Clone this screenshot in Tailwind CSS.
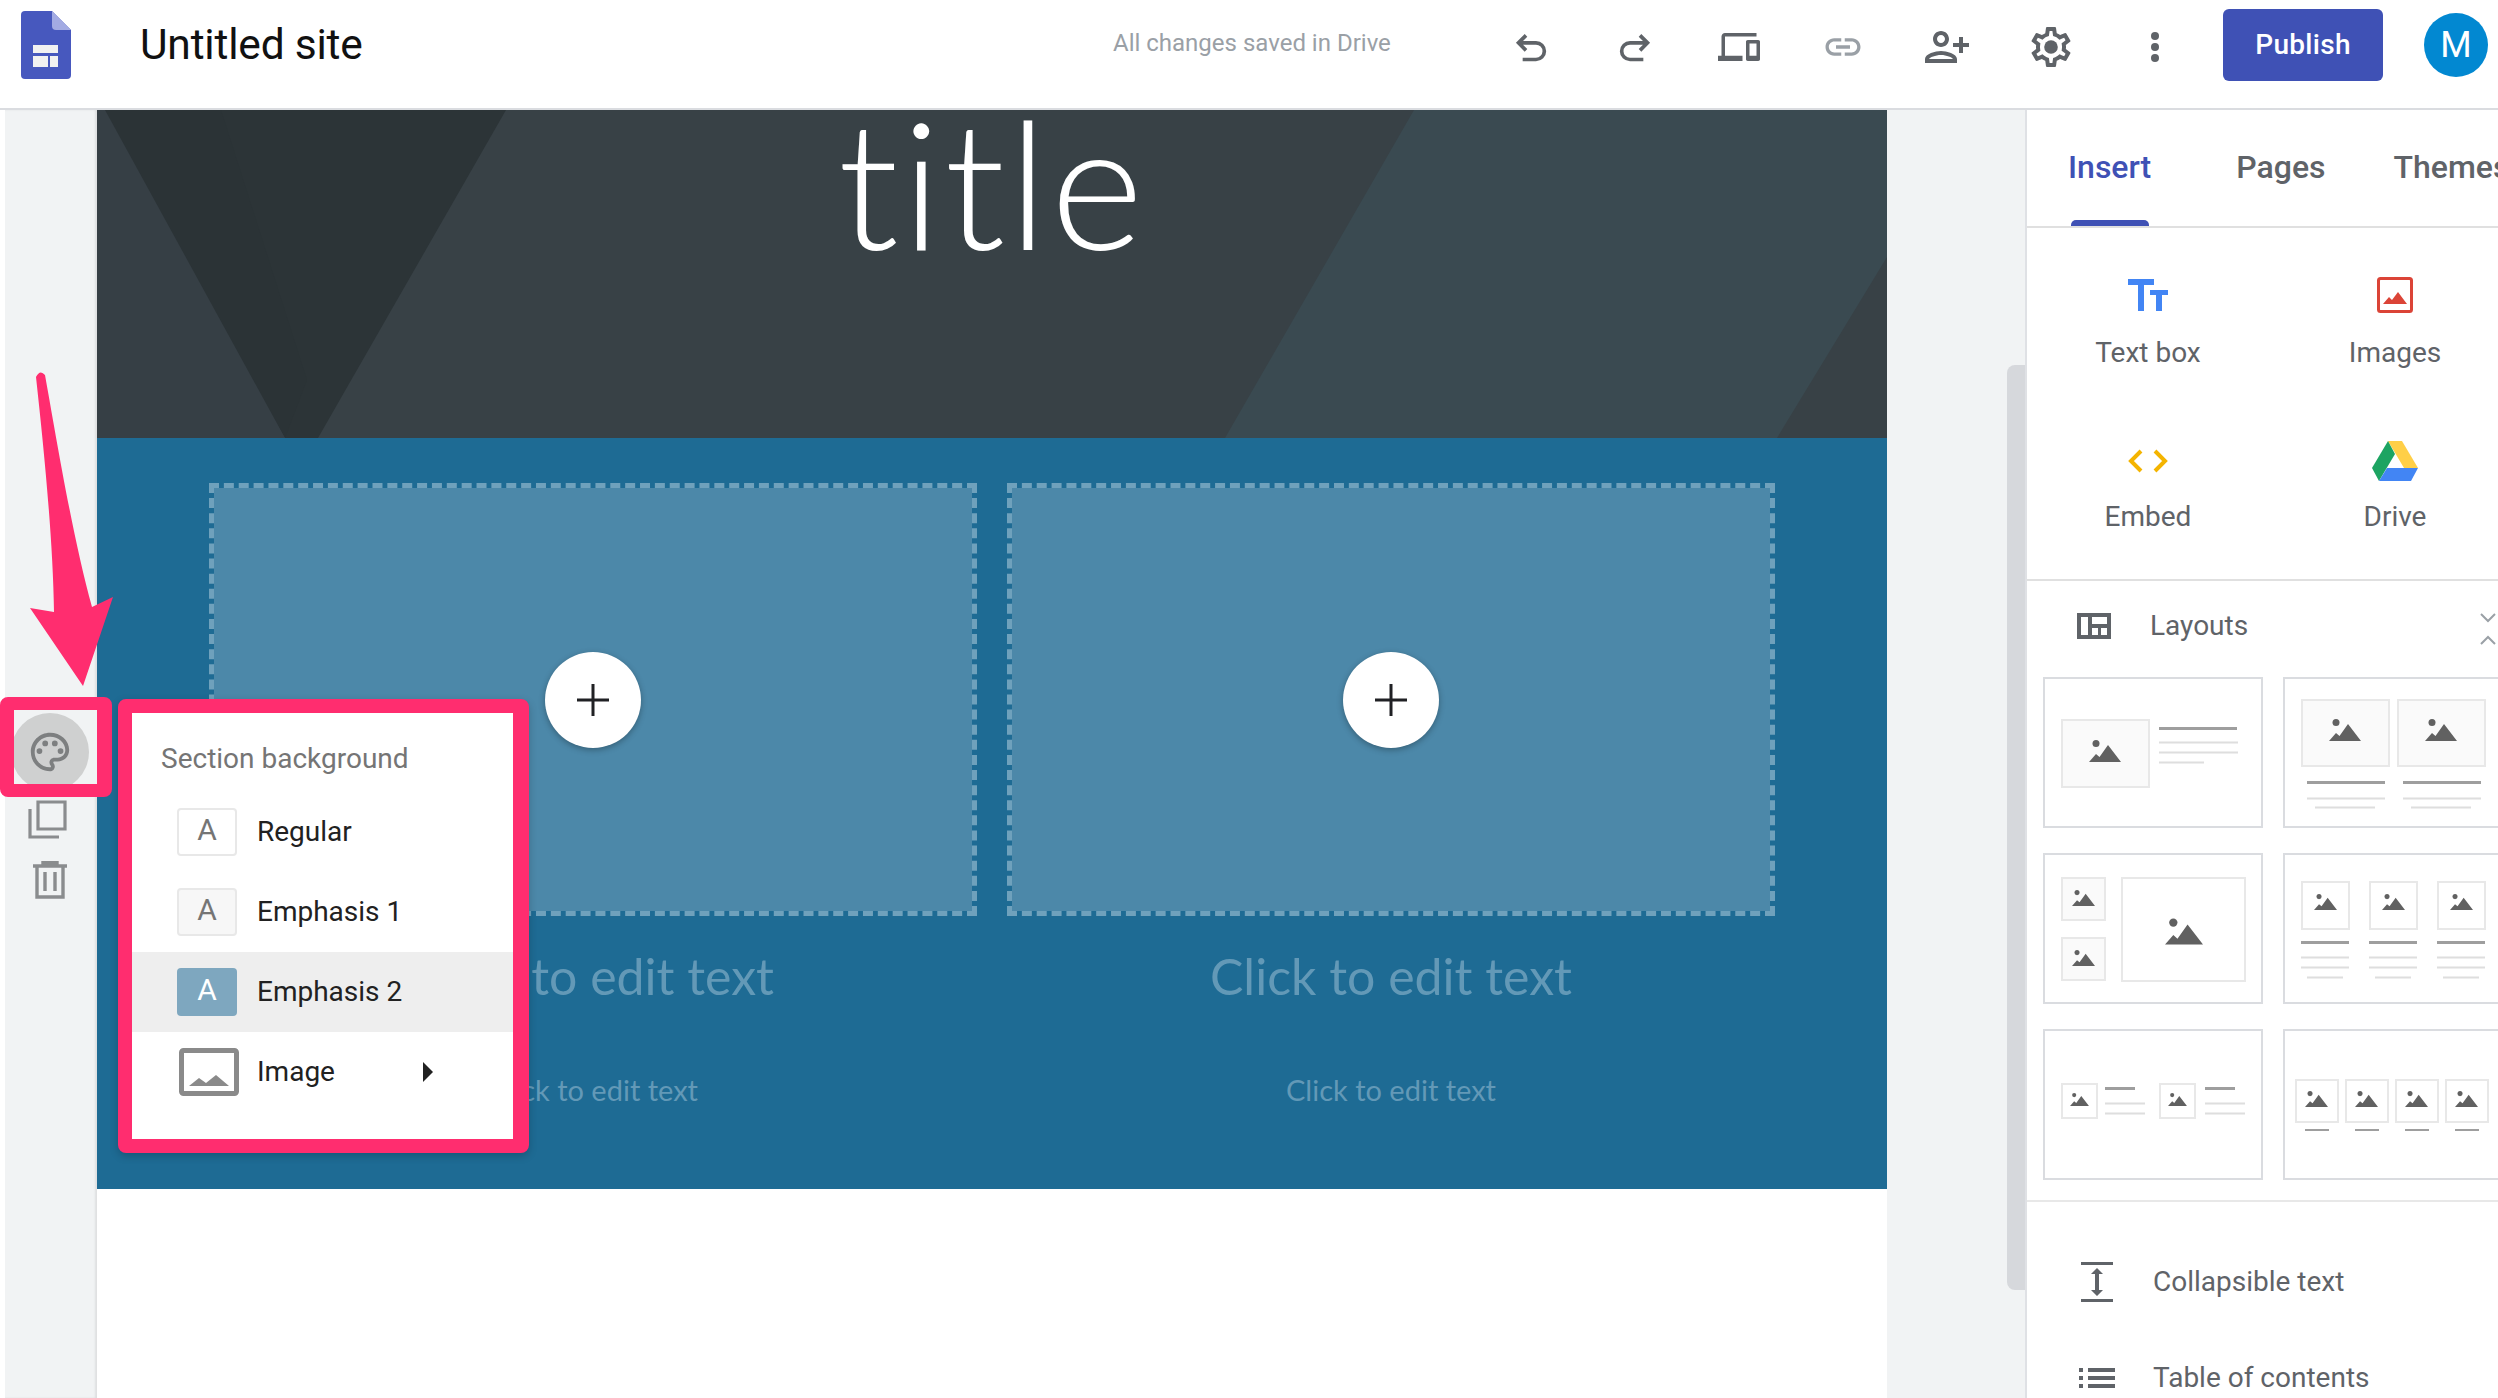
<!DOCTYPE html>
<html><head><meta charset="utf-8"><script src="https://cdn.jsdelivr.net/npm/@tailwindcss/browser@4"></script></head>
<body class="w-[2498px] h-[1398px] overflow-hidden bg-white font-['Roboto',sans-serif] relative">
<svg class="absolute w-0 h-0"><defs>
<symbol id="m" viewBox="0 0 32 22"><circle cx="7" cy="3.5" r="3.5" fill="#616161"/><path d="M0 22 L7 14 L10.5 17 L19 5 L32 22Z" fill="#616161"/></symbol>
</defs></svg>

<header class="h-[110px] border-b-2 border-[#dadce0] flex items-center pb-[26px] pt-[8px] relative">
  <svg class="ml-[21px] w-[50px] h-[68px] shrink-0" viewBox="0 0 50 68"><path d="M4 0H31L50 19V64a4 4 0 0 1-4 4H4a4 4 0 0 1-4-4V4a4 4 0 0 1 4-4Z" fill="#4758be"/><path d="M31 0L50 19H35a4 4 0 0 1-4-4Z" fill="#a3abe3"/><path d="M12 34H37V42H12ZM12 45H27V56H12ZM29 45H37V56H29Z" fill="#f1f1f1"/></svg>
  <div class="ml-[69px] w-[300px] text-[42.5px] leading-none text-[#111] font-['Roboto'] tracking-[-0.2px] whitespace-nowrap shrink-0">Untitled site</div>
  <div class="ml-[673px] w-[277px] text-[24px] leading-none text-[#9aa0a6] whitespace-nowrap shrink-0 -mt-[4px]">All changes saved in Drive</div>
  <div class="ml-[117px] mt-[4px] flex items-center gap-[56px] shrink-0">
    <div class="w-[48px] flex justify-center"><svg class="w-[40px] h-[40px]" viewBox="0 0 24 24" fill="none" stroke="#5f6368" stroke-width="2.2"><path d="M9 5L4.5 9.5L9 14M4.5 9.5H15a5 5 0 0 1 0 10H7"/></svg></div>
    <div class="w-[48px] flex justify-center"><svg class="w-[40px] h-[40px]" viewBox="0 0 24 24" fill="none" stroke="#5f6368" stroke-width="2.2"><path d="M15 5L19.5 9.5L15 14M19.5 9.5H9a5 5 0 0 0 0 10H17"/></svg></div>
    <div class="w-[48px] flex justify-center"><svg class="w-[42px] h-[42px]" viewBox="0 0 24 24" fill="#5f6368"><path d="M4 6h18V4H4c-1.1 0-2 .9-2 2v11H0v3h14v-3H4V6zm19 2h-6c-.55 0-1 .45-1 1v10c0 .55.45 1 1 1h6c.55 0 1-.45 1-1V9c0-.55-.45-1-1-1zm-1 9h-4v-7h4v7z"/></svg></div>
    <div class="w-[48px] flex justify-center"><svg class="w-[42px] h-[42px]" viewBox="0 0 24 24" fill="#9aa0a6"><path d="M3.9 12c0-1.71 1.39-3.1 3.1-3.1h4V7H7c-2.76 0-5 2.24-5 5s2.24 5 5 5h4v-1.9H7c-1.71 0-3.1-1.39-3.1-3.1zM8 13h8v-2H8v2zm9-6h-4v1.9h4c1.71 0 3.1 1.39 3.1 3.1s-1.39 3.1-3.1 3.1h-4V17h4c2.76 0 5-2.24 5-5s-2.24-5-5-5z"/></svg></div>
    <div class="w-[48px] flex justify-center"><svg class="w-[48px] h-[48px] -scale-x-100" viewBox="0 0 24 24" fill="#5f6368"><path d="M15 12c2.21 0 4-1.79 4-4s-1.79-4-4-4-4 1.79-4 4 1.79 4 4 4zm0-6c1.1 0 2 .9 2 2s-.9 2-2 2-2-.9-2-2 .9-2 2-2zm0 8c-2.67 0-8 1.34-8 4v2h16v-2c0-2.66-5.33-4-8-4zm-6 4c.22-.72 3.31-2 6-2 2.7 0 5.8 1.29 6 2H9zm-3-3v-3h3v-2H6V7H4v3H1v2h3v3h2z"/></svg></div>
    <div class="w-[48px] flex justify-center"><svg class="w-[48px] h-[48px]" viewBox="0 0 24 24" fill="#5f6368"><path d="M19.43 12.98c.04-.32.07-.64.07-.98 0-.34-.03-.66-.07-.98l2.11-1.65c.19-.15.24-.42.12-.64l-2-3.46c-.09-.16-.26-.25-.44-.25-.06 0-.12.01-.17.03l-2.49 1c-.52-.4-1.08-.73-1.69-.98l-.38-2.65C14.46 2.18 14.25 2 14 2h-4c-.25 0-.46.18-.49.42l-.38 2.65c-.61.25-1.17.59-1.69.98l-2.49-1c-.06-.02-.12-.03-.18-.03-.17 0-.34.09-.43.25l-2 3.46c-.13.22-.07.49.12.64l2.11 1.65c-.04.32-.07.65-.07.98 0 .33.03.66.07.98l-2.11 1.65c-.19.15-.24.42-.12.64l2 3.46c.09.16.26.25.44.25.06 0 .12-.01.17-.03l2.49-1c.52.4 1.08.73 1.69.98l.38 2.65c.03.24.24.42.49.42h4c.25 0 .46-.18.49-.42l.38-2.65c.61-.25 1.17-.59 1.69-.98l2.49 1c.06.02.12.03.18.03.17 0 .34-.09.43-.25l2-3.46c.12-.22.07-.49-.12-.64l-2.11-1.65zm-1.98-1.71c.04.31.05.52.05.73 0 .21-.02.43-.05.73l-.14 1.13.89.7 1.08.84-.7 1.21-1.27-.51-1.04-.42-.9.68c-.43.32-.84.56-1.25.73l-1.06.43-.16 1.13-.2 1.35h-1.4l-.19-1.35-.16-1.13-1.06-.43c-.43-.18-.83-.41-1.23-.71l-.91-.7-1.06.43-1.27.51-.7-1.21 1.08-.84.89-.7-.14-1.13c-.03-.31-.05-.54-.05-.74s.02-.43.05-.73l.14-1.13-.89-.7-1.08-.84.7-1.21 1.27.51 1.04.42.9-.68c.43-.32.84-.56 1.25-.73l1.06-.43.16-1.13.2-1.35h1.39l.19 1.35.16 1.13 1.06.43c.43.18.83.41 1.23.71l.91.7 1.06-.43 1.27-.51.7 1.21-1.07.85-.89.7.14 1.13z"/><circle cx="12" cy="12" r="3.4"/></svg></div>
    <div class="w-[48px] flex justify-center"><div class="w-[9px] h-[30px] flex flex-col justify-between items-center"><span class="w-[8px] h-[8px] rounded-full bg-[#5f6368]"></span><span class="w-[8px] h-[8px] rounded-full bg-[#5f6368]"></span><span class="w-[8px] h-[8px] rounded-full bg-[#5f6368]"></span></div></div>
  </div>
  <div class="ml-[44px] w-[160px] h-[72px] rounded-[6px] bg-[#3f51b5] text-white text-[28px] tracking-[0.3px] font-medium flex items-center justify-center shrink-0">Publish</div>
  <div class="ml-[41px] w-[64px] h-[64px] rounded-full bg-[#0288d1] text-white text-[36px] flex items-center justify-center shrink-0">M</div>
</header>

<div class="flex h-[1288px]">
  <div class="ml-[5px] w-[92px] bg-[#f1f3f4] shadow-[inset_-2px_0_2px_rgba(0,0,0,0.08)] flex flex-col items-center pt-[689px] pr-[6px]">
    <svg class="w-[40px] h-[40px]" viewBox="0 0 40 40" fill="none" stroke="#8a8c8e" stroke-width="3.2"><path d="M10 3H37V30H10ZM2 10V38H31"/></svg>
    <svg class="w-[34px] h-[38px] mt-[22px] ml-[3px]" viewBox="0 0 34 38" fill="none" stroke="#8a8c8e" stroke-width="3.4"><path d="M0 5H34M10 5V1.5H24V5M4 5V36H30V5M12 11V30M22 11V30"/></svg>
  </div>
  <main class="w-[1790px] bg-white flex flex-col">
    <section class="h-[328px] relative overflow-hidden bg-[#384146]">
      <svg class="absolute inset-0 w-full h-full" viewBox="0 0 1790 328">
        <polygon points="0,0 409,0 221,328 188,328" fill="#2c3437"/>
        <polygon points="0,0 124,0 210,270 188,328" fill="#2b3336"/>
        <polygon points="0,0 8,0 188,328 0,328" fill="#363f45"/>
        <polygon points="1317,0 1790,0 1790,147 1680,328 1128,328" fill="#3a4a51"/>
      </svg>
      <div class="relative text-center text-white font-['Lato'] font-light text-[178px] leading-[142px] tracking-[3px]">title</div>
    </section>
    <section class="h-[751px] bg-[#1e6b94] px-[112px] pt-[45px]">
      <div class="flex gap-[30px]">
        <div class="w-[768px]">
          <div class="h-[433px] bg-[#4c88a9] bg-clip-padding border-[5px] border-dashed border-[#6fa1bc] flex items-center justify-center"><div class="w-[96px] h-[96px] rounded-full bg-white shadow-[0_2px_6px_rgba(0,0,0,0.3)] flex items-center justify-center"><svg class="w-[36px] h-[36px]" viewBox="0 0 36 36" fill="#202124"><path d="M16.5 2h3v14.5H34v3H19.5V34h-3V19.5H2v-3h14.5Z"/></svg></div></div>
          <div class="mt-[34px] text-center text-[50px] leading-[52px] text-[#6399b7] font-['Lato']">Click to edit text</div>
          <div class="mt-[68px] text-center text-[29px] leading-[40px] text-[#6399b7] font-['Lato']">Click to edit text</div>
        </div>
        <div class="w-[768px]">
          <div class="h-[433px] bg-[#4c88a9] bg-clip-padding border-[5px] border-dashed border-[#6fa1bc] flex items-center justify-center"><div class="w-[96px] h-[96px] rounded-full bg-white shadow-[0_2px_6px_rgba(0,0,0,0.3)] flex items-center justify-center"><svg class="w-[36px] h-[36px]" viewBox="0 0 36 36" fill="#202124"><path d="M16.5 2h3v14.5H34v3H19.5V34h-3V19.5H2v-3h14.5Z"/></svg></div></div>
          <div class="mt-[34px] text-center text-[50px] leading-[52px] text-[#6399b7] font-['Lato']">Click to edit text</div>
          <div class="mt-[68px] text-center text-[29px] leading-[40px] text-[#6399b7] font-['Lato']">Click to edit text</div>
        </div>
      </div>
    </section>
    <div class="flex-1 bg-white"></div>
  </main>
  <div class="w-[138px] bg-[#f1f3f4] relative">
    <div class="absolute right-0 top-[255px] w-[18px] h-[925px] bg-[#d6d8dc] rounded-l-[8px]"></div>
  </div>
  <aside class="w-[473px] bg-white border-l-2 border-[#dfe1e5] overflow-hidden">
    <div class="h-[118px] border-b-2 border-[#e0e0e0] flex items-start pt-[37px] relative text-[32px] leading-[40px] font-medium text-[#5f6368] whitespace-nowrap">
      <div class="ml-[41px] text-[#3f51b5] relative">Insert<span class="absolute left-[3px] top-[73px] w-[78px] h-[6px] rounded-t-[5px] bg-[#3f51b5]"></span></div>
      <div class="ml-[85px]">Pages</div>
      <div class="ml-[68px]">Themes</div>
    </div>
    <div class="h-[353px] border-b-2 border-[#e0e0e0] grid grid-cols-[242px_252px] auto-rows-[164px] pt-[45px] text-[28px] text-[#5f6368] leading-[30px] text-center w-[471px]">
      <div class="flex flex-col items-center"><div class="h-[44px] mb-[21px] flex items-center"><svg class="w-[40px] h-[32px]" viewBox="0 0 40 32" fill="#4285f4"><path d="M0 0H26V6H16V32H10V6H0ZM22 11H40V16H34V32H28V16H22Z"/></svg></div>Text box</div>
      <div class="flex flex-col items-center"><div class="h-[44px] mb-[21px] flex items-center"><svg class="w-[36px] h-[36px]" viewBox="0 0 36 36" fill="none"><rect x="1.5" y="1.5" width="33" height="33" rx="2" stroke="#db4437" stroke-width="3"/><path d="M6 27L12 20L15 23L21 15L30 27Z" fill="#db4437"/></svg></div>Images</div>
      <div class="flex flex-col items-center"><div class="h-[44px] mb-[21px] flex items-center pt-[4px]"><svg class="w-[40px] h-[24px]" viewBox="0 0 40 24" fill="none" stroke="#f4b400" stroke-width="4"><path d="M13 2L3 12L13 22M27 2L37 12L27 22"/></svg></div>Embed</div>
      <div class="flex flex-col items-center"><div class="h-[44px] mb-[21px] flex items-center pt-[4px]"><svg class="w-[46px] h-[40px]" viewBox="0 0 46 40"><path d="M16 0H30L46 27H32Z" fill="#ffcf47"/><path d="M16 0L0 27L7 40L23 13Z" fill="#1da462"/><path d="M7 40H39L46 27H15Z" fill="#4285f4"/></svg></div>Drive</div>
    </div>
    <div class="h-[96px] pb-[6px] flex items-center relative text-[28px] text-[#5f6368]">
      <svg class="ml-[50px] w-[34px] h-[26px]" viewBox="0 0 34 26" fill="#5f6368"><path fill-rule="evenodd" d="M0 0H34V26H0ZM4 4V22H11V4ZM15 4V11H30V4ZM15 15V22H21V15ZM24 15V22H30V15Z"/></svg>
      <span class="ml-[39px]">Layouts</span>
      <svg class="absolute left-[453px] top-[30px] w-[16px] h-[36px]" viewBox="0 0 16 36" fill="none" stroke="#9aa0a6" stroke-width="2"><path d="M1 3L8 10L15 3M1 33L8 26L15 33"/></svg>
    </div>
    <div class="grid grid-cols-[220px_220px] gap-x-[20px] gap-y-[25px] pl-[16px]">
      <svg class="w-[220px] h-[151px]" viewBox="0 0 220 151"><rect x="1" y="1" width="218" height="149" fill="none" stroke="#dadce0" stroke-width="2"/><rect x="19" y="43" width="87" height="67" fill="#fafafa" stroke="#e8e8e8" stroke-width="2"/><use href="#m" x="46" y="63" width="32" height="22"/><path d="M116 51.5H194" stroke="#9e9e9e" stroke-width="3"/><path d="M116 65.5H195M116 75.5H195M116 85.5H161" stroke="#dedede" stroke-width="2"/></svg>
      <svg class="w-[220px] h-[151px]" viewBox="0 0 220 151"><rect x="1" y="1" width="218" height="149" fill="none" stroke="#dadce0" stroke-width="2"/><rect x="19" y="23" width="87" height="66" fill="#fafafa" stroke="#e8e8e8" stroke-width="2"/><rect x="115" y="23" width="87" height="66" fill="#fafafa" stroke="#e8e8e8" stroke-width="2"/><use href="#m" x="46" y="42" width="32" height="22"/><use href="#m" x="142" y="42" width="32" height="22"/><path d="M24 105.5H102M120 105.5H198" stroke="#9e9e9e" stroke-width="3"/><path d="M24 121.5H102M120 121.5H198M32 130.5H92M128 130.5H188" stroke="#dedede" stroke-width="2"/></svg>
      <svg class="w-[220px] h-[151px]" viewBox="0 0 220 151"><rect x="1" y="1" width="218" height="149" fill="none" stroke="#dadce0" stroke-width="2"/><rect x="19" y="25" width="43" height="42" fill="#fafafa" stroke="#e8e8e8" stroke-width="2"/><rect x="19" y="85" width="43" height="42" fill="#fafafa" stroke="#e8e8e8" stroke-width="2"/><rect x="79" y="25" width="123" height="103" fill="#fff" stroke="#e8e8e8" stroke-width="2"/><use href="#m" x="29" y="37" width="23" height="16"/><use href="#m" x="29" y="97" width="23" height="16"/><use href="#m" x="122" y="65" width="38" height="27"/></svg>
      <svg class="w-[220px] h-[151px]" viewBox="0 0 220 151"><rect x="1" y="1" width="218" height="149" fill="none" stroke="#dadce0" stroke-width="2"/><g fill="#fff" stroke="#e8e8e8" stroke-width="2"><rect x="19" y="29" width="47" height="47"/><rect x="87" y="29" width="47" height="47"/><rect x="155" y="29" width="47" height="47"/></g><use href="#m" x="31" y="41" width="23" height="16"/><use href="#m" x="99" y="41" width="23" height="16"/><use href="#m" x="167" y="41" width="23" height="16"/><path d="M18 89.5H66M86 89.5H134M154 89.5H202" stroke="#9e9e9e" stroke-width="3"/><path d="M18 104.5H66M86 104.5H134M154 104.5H202M18 114.5H66M86 114.5H134M154 114.5H202M24 124.5H60M92 124.5H128M160 124.5H196" stroke="#dedede" stroke-width="2"/></svg>
      <svg class="w-[220px] h-[151px]" viewBox="0 0 220 151"><rect x="1" y="1" width="218" height="149" fill="none" stroke="#dadce0" stroke-width="2"/><g fill="#fff" stroke="#e8e8e8" stroke-width="2"><rect x="19" y="55" width="35" height="34"/><rect x="117" y="55" width="35" height="34"/></g><use href="#m" x="27" y="64" width="19" height="13"/><use href="#m" x="125" y="64" width="19" height="13"/><path d="M62 59.5H92M162 59.5H192" stroke="#9e9e9e" stroke-width="3"/><path d="M62 74.5H102M162 74.5H202M62 84.5H102M162 84.5H202" stroke="#dedede" stroke-width="2"/></svg>
      <svg class="w-[220px] h-[151px]" viewBox="0 0 220 151"><rect x="1" y="1" width="218" height="149" fill="none" stroke="#dadce0" stroke-width="2"/><g fill="#fff" stroke="#e8e8e8" stroke-width="2"><rect x="13" y="51" width="42" height="42"/><rect x="63" y="51" width="42" height="42"/><rect x="113" y="51" width="42" height="42"/><rect x="163" y="51" width="42" height="42"/></g><use href="#m" x="22" y="62" width="23" height="16"/><use href="#m" x="72" y="62" width="23" height="16"/><use href="#m" x="122" y="62" width="23" height="16"/><use href="#m" x="172" y="62" width="23" height="16"/><path d="M22 101H46M72 101H96M122 101H146M172 101H196" stroke="#9e9e9e" stroke-width="2"/></svg>
    </div>
    <div class="mt-[20px] border-t-2 border-[#e8e8e8] pt-[60px] text-[28px] text-[#5f6368] leading-none">
      <div class="flex items-center h-[40px]"><svg class="ml-[54px] w-[32px] h-[40px]" viewBox="0 0 32 40" fill="#5f6368"><path d="M0 0H32V3H0ZM0 37H32V40H0ZM16 6L22 12H18V28H22L16 34L10 28H14V12H10Z"/></svg><span class="ml-[40px]">Collapsible text</span></div>
      <div class="flex items-center h-[40px] mt-[56px]"><svg class="ml-[52px] w-[36px] h-[20px]" viewBox="0 0 36 20" fill="#5f6368"><path d="M0 0H4V4H0ZM0 8H4V12H0ZM0 16H4V20H0ZM9 0H36V4H9ZM9 8H36V12H9ZM9 16H36V20H9Z"/></svg><span class="ml-[38px]">Table of contents</span></div>
    </div>
  </aside>
</div>

<!-- annotation overlays -->
<svg class="absolute left-0 top-[360px] w-[125px] h-[340px]" viewBox="0 0 125 340"><path d="M36 17Q40 9 45 15C55 70 72 175 92 247L113 237L83 326L30 248L54 252C53 180 44 90 36 17Z" fill="#ff2d6f"/></svg>
<div class="absolute left-0 top-[697px] w-[112px] h-[100px] rounded-[8px] border-[#ff2d6f] border-l-[14px] border-r-[15px] border-y-[13px] bg-[#f1f3f4] overflow-hidden flex items-center justify-center">
  <div class="w-[78px] h-[78px] rounded-full bg-[#cfd0d0] flex items-center justify-center shrink-0 mr-[12px] mt-[9px]"><svg class="w-[46px] h-[46px]" viewBox="0 0 24 24" fill="#7d7f80"><path d="M12 22C6.49 22 2 17.51 2 12S6.49 2 12 2s10 4.04 10 9c0 3.31-2.69 6-6 6h-1.77c-.28 0-.5.22-.5.5 0 .12.05.23.13.33.41.47.64 1.06.64 1.67 0 1.38-1.12 2.5-2.5 2.5zm0-18c-4.41 0-8 3.59-8 8s3.59 8 8 8c.28 0 .5-.22.5-.5 0-.16-.08-.28-.14-.35-.41-.46-.63-1.05-.63-1.65 0-1.38 1.12-2.5 2.5-2.5H16c2.21 0 4-1.79 4-4 0-3.86-3.59-7-8-7z"/><circle cx="6.5" cy="11.5" r="1.5"/><circle cx="9.5" cy="7.5" r="1.5"/><circle cx="14.5" cy="7.5" r="1.5"/><circle cx="17.5" cy="11.5" r="1.5"/></svg></div>
</div>
<div class="absolute left-[118px] top-[699px] w-[411px] h-[454px] rounded-[8px] border-[#ff2d6f] border-l-[14px] border-r-[16px] border-y-[14px] bg-white shadow-[0_3px_8px_rgba(0,0,0,0.2)] pt-[26px] text-[28px] leading-none">
  <div class="ml-[29px] h-[40px] text-[#757575] flex items-center">Section background</div>
  <div class="flex flex-col mt-[13px]">
    <div class="h-[80px] flex items-center pl-[45px] text-[#212121]"><span class="w-[60px] h-[48px] rounded-[4px] border-2 border-[#e8e8e8] bg-white text-[#757575] text-[30px] flex items-center justify-center pb-[4px]">A</span><span class="ml-[20px]">Regular</span></div>
    <div class="h-[80px] flex items-center pl-[45px] text-[#212121]"><span class="w-[60px] h-[48px] rounded-[4px] border-2 border-[#e8e8e8] bg-[#f7f7f7] text-[#757575] text-[30px] flex items-center justify-center pb-[4px]">A</span><span class="ml-[20px]">Emphasis 1</span></div>
    <div class="h-[80px] flex items-center pl-[45px] text-[#212121] bg-[#eeeeee]"><span class="w-[60px] h-[48px] rounded-[4px] bg-[#7ea7bf] text-white text-[30px] flex items-center justify-center pb-[4px]">A</span><span class="ml-[20px]">Emphasis 2</span></div>
    <div class="h-[80px] flex items-center pl-[47px] text-[#212121]"><svg class="w-[60px] h-[48px]" viewBox="0 0 60 48"><rect x="2.5" y="2.5" width="55" height="43" rx="2" fill="#fff" stroke="#8a8a8a" stroke-width="5"/><path d="M10 38L20 30L27 35L37 27L50 38Z" fill="#8a8a8a"/></svg><span class="ml-[18px]">Image</span><svg class="ml-[88px] w-[10px] h-[20px]" viewBox="0 0 10 20" fill="#212121"><path d="M0 0L10 10L0 20Z"/></svg></div>
  </div>
</div>
</body></html>
